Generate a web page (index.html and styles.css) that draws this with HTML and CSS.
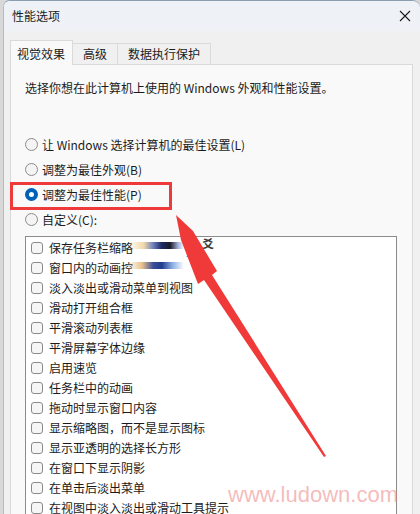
FILE: index.html
```html
<!DOCTYPE html>
<html lang="zh-CN">
<head>
<meta charset="utf-8">
<title>性能选项</title>
<link rel="stylesheet" href="styles.css">
</head>
<body>
<div class="window">
  <div class="titlebar">
    <span class="title">性能选项</span>
    <svg class="close" width="12" height="12" viewBox="0 0 12 12"><path d="M1 1 L11 11 M11 1 L1 11" stroke="#1a1a1a" stroke-width="1.1" fill="none"/></svg>
  </div>
  <div class="content">
    <div class="tabs">
      <div class="tab active">视觉效果</div>
      <div class="tab">高级</div>
      <div class="tab">数据执行保护</div>
    </div>
    <div class="panel">
      <p class="desc">选择你想在此计算机上使用的 Windows 外观和性能设置。</p>
      <div class="radios">
        <div class="radio-row"><span class="radio"></span><span>让 Windows 选择计算机的最佳设置(L)</span></div>
        <div class="radio-row"><span class="radio"></span><span>调整为最佳外观(B)</span></div>
        <div class="radio-row"><span class="radio checked"></span><span>调整为最佳性能(P)</span></div>
        <div class="radio-row"><span class="radio"></span><span>自定义(C):</span></div>
        <div class="highlight"></div>
      </div>
      <div class="list">
        <div class="item"><span class="check"></span><span>保存任务栏缩略</span></div>
        <div class="item"><span class="check"></span><span>窗口内的动画控</span></div>
        <div class="item"><span class="check"></span><span>淡入淡出或滑动菜单到视图</span></div>
        <div class="item"><span class="check"></span><span>滑动打开组合框</span></div>
        <div class="item"><span class="check"></span><span>平滑滚动列表框</span></div>
        <div class="item"><span class="check"></span><span>平滑屏幕字体边缘</span></div>
        <div class="item"><span class="check"></span><span>启用速览</span></div>
        <div class="item"><span class="check"></span><span>任务栏中的动画</span></div>
        <div class="item"><span class="check"></span><span>拖动时显示窗口内容</span></div>
        <div class="item"><span class="check"></span><span>显示缩略图，而不是显示图标</span></div>
        <div class="item"><span class="check"></span><span>显示亚透明的选择长方形</span></div>
        <div class="item"><span class="check"></span><span>在窗口下显示阴影</span></div>
        <div class="item"><span class="check"></span><span>在单击后淡出菜单</span></div>
        <div class="item"><span class="check"></span><span>在视图中淡入淡出或滑动工具提示</span></div>
      </div>
    </div>
  </div>
</div>

<div class="smear s1"></div>
<div class="smear s2"></div>
<div class="dots"><i></i><i></i><i></i><i></i><i></i></div>
<span class="ghost g1">爻</span>
<span class="ghost g2">xı</span>

<svg class="arrow" width="420" height="514" viewBox="0 0 420 514">
  <polygon points="176,215 193,231 217,271 212,275 326,456 324,457 204,280 198,284 181,240" fill="#f03a3a"/>
</svg>
<div class="watermark">www.ludown.com</div>
</body>
</html>
```

FILE: styles.css
```css
* { box-sizing: border-box; }
html, body { margin: 0; padding: 0; }
body {
  width: 420px;
  height: 514px;
  overflow: hidden;
  background: #d8d8d8;
  font-family: "Noto Sans CJK SC", "Noto Sans", sans-serif;
  font-size: 12px;
  color: #1b1b1b;
  position: relative;
}
.window {
  margin-left: 3px;
  height: 514px;
  background: #f0f0f0;
  border-top: 1px solid #8d9db0;
  border-left: 1px solid #b4bcc6;
  border-radius: 7px 8px 0 0;
  overflow: hidden;
}
.titlebar {
  height: 30px;
  background: #eef2f7;
  display: flex;
  align-items: center;
  justify-content: space-between;
  padding: 0 9px 0 8px;
}
.title { font-size: 12px; line-height: 16px; }
.close { display: block; margin-top: -1px; }
.content { padding: 9px 0 0 6px; }
.tabs {
  display: flex;
  align-items: flex-end;
  height: 24px;
  position: relative;
  z-index: 1;
}
.tab {
  height: 21px;
  border: 1px solid #dadada;
  border-bottom: none;
  background: #f0f0f0;
  padding: 0 10px 0 10px;
  line-height: 20px;
  margin-left: -1px;
}
.tab:first-child { margin-left: 0; }
.tab.active {
  background: #f9f9f9;
  padding: 0 7px 0 6px;
  line-height: 25px;
  margin-bottom: -1px;
  height: 25px;
}
.panel {
  width: 403px;
  height: 460px;
  background: #f9f9f9;
  border: 1px solid #dadada;
  border-bottom: none;
  padding: 14px 0 0 14px;
}
.desc {
  margin: 0;
  line-height: 18px;
}
.radios {
  margin-top: 35px;
  position: relative;
}
.radio-row {
  height: 25px;
  display: flex;
  align-items: center;
  gap: 4px;
  line-height: 16px;
}
.radio {
  width: 13px;
  height: 13px;
  border-radius: 50%;
  border: 1px solid #8b8b8b;
  background: #f4f4f4;
  flex: none;
}
.radio.checked {
  border: 4px solid #0061b8;
  background: #ffffff;
}
.highlight {
  position: absolute;
  left: -15px;
  top: 50px;
  width: 162px;
  height: 28px;
  border: 3px solid #ee3a3a;
}
.list {
  margin-top: 4px;
  width: 372px;
  height: 300px;
  background: #ffffff;
  border: 1px solid #8c8c8c;
  border-bottom: none;
  padding-top: 1px;
  padding-left: 5px;
}
.item {
  height: 20px;
  display: flex;
  align-items: center;
  gap: 6px;
  line-height: 12px;
}
.check {
  width: 12px;
  height: 12px;
  border: 1px solid #8a8a8a;
  border-radius: 3px;
  background: #f6f6f6;
  flex: none;
}
.smear {
  position: absolute;
  height: 7px;
}
.s1 {
  left: 128px; top: 242px; width: 56px;
  background: linear-gradient(to right, rgba(255,255,255,0), #f1d9a8 28%, #6e7fc0 45%, #1d2a66 60%, #1a1a2a 75%, #a9b7e0 90%, rgba(255,255,255,0));
}
.s2 {
  left: 128px; top: 262px; width: 56px;
  background: linear-gradient(to right, rgba(255,255,255,0), #e9c28a 25%, #3b4f9a 45%, #1f3c8c 60%, #8fb2e6 80%, rgba(255,255,255,0));
}
.dots { position: absolute; left: 184px; top: 244px; width: 14px; height: 20px; }
.dots i { position: absolute; width: 4px; height: 3px; background: #1e9be8; transform: skewX(-20deg); }
.dots i:nth-child(1) { left: 9px; top: 0; }
.dots i:nth-child(2) { left: 6px; top: 4px; }
.dots i:nth-child(3) { left: 9px; top: 7px; }
.dots i:nth-child(4) { left: 3px; top: 10px; }
.dots i:nth-child(5) { left: 6px; top: 14px; }
.ghost { position: absolute; font-size: 12px; line-height: 12px; }
.g1 { left: 202px; top: 238px; color: #3a3a3a; font-weight: bold; }
.g2 { left: 200px; top: 259px; color: #b0b0b0; font-size: 10px; }
.arrow { position: absolute; left: 0; top: 0; pointer-events: none; }
.watermark {
  position: absolute;
  left: 228px;
  top: 482px;
  font-family: "Liberation Sans", Arial, sans-serif;
  font-size: 22px;
  line-height: 26px;
  color: rgba(236, 120, 120, 0.5);
}
```
